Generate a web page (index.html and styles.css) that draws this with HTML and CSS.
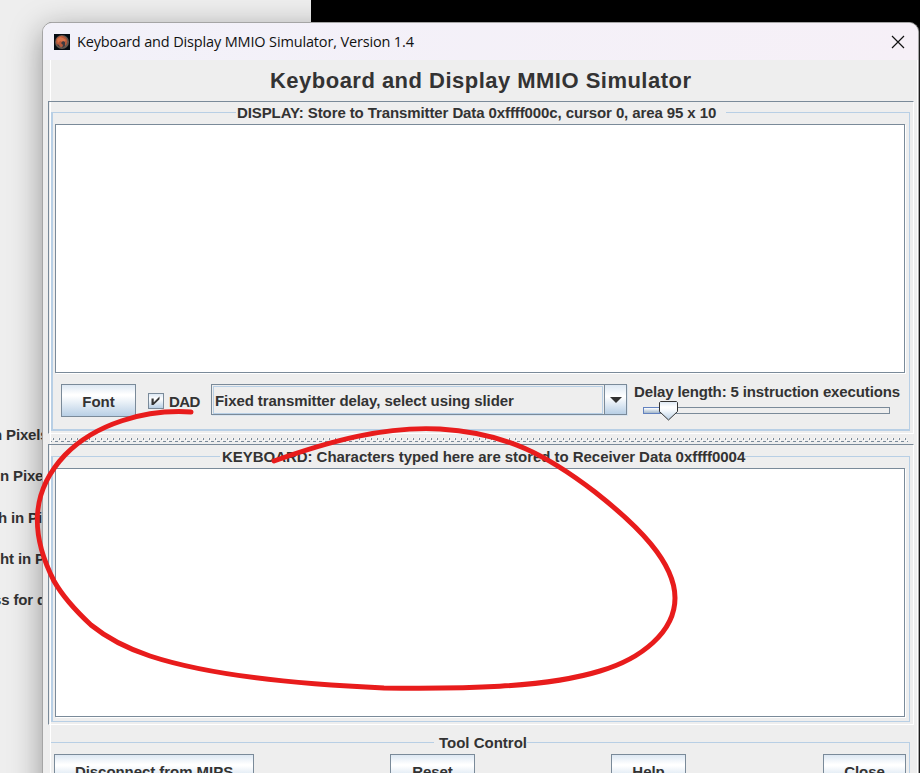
FILE: index.html
```html
<!DOCTYPE html>
<html lang="en">
<head>
<meta charset="utf-8">
<title>Keyboard and Display MMIO Simulator, Version 1.4</title>
<link rel="stylesheet" href="styles.css">
</head>
<body>
<div class="desktop">
  <div class="black-area"></div>
  <div class="back-labels">
    <span>n Pixels</span><span>n Pixels</span><span>h in Pixels</span><span>ht in Pixels</span><span>ss for display</span>
  </div>
  <main class="window">
    <header class="titlebar">
      <svg class="app-icon" viewBox="0 0 16 16"><rect width="16" height="16" fill="#050c12"/><circle cx="8" cy="8" r="7" fill="#64584f"/><circle cx="7.6" cy="7.4" r="5.6" fill="#b65a3b"/><path d="M3 5l3-2 3 1 3 2-2 2-4-1-2 2z" fill="#d8744a"/><path d="M9 7l2 1v4l-3 2 1-3-2-2zM3 10l2 1 1 2-2-1z" fill="#3d3a40"/></svg>
      <span class="window-title">Keyboard and Display MMIO Simulator, Version 1.4</span>
      <svg class="close" viewBox="0 0 14 14"><path d="M1 1l12 12M13 1L1 13" stroke="#111" stroke-width="1.2" fill="none"/></svg>
    </header>
    <div class="client">
      <h1><span>Keyboard and Display MMIO Simulator</span></h1>
      <section class="pane pane-display">
        <div class="legend"><span class="t-display">DISPLAY: Store to Transmitter Data 0xffff000c, cursor 0, area 95 x 10</span></div>
        <div class="group">
          <div class="textarea"></div>
          <div class="controls">
            <div class="button font"><span>Font</span></div>
            <div class="check"><svg viewBox="0 0 14 14"><path d="M2.500 4.500h2.200v6.500h-2.200zM4.500 8.500L10.500 2.500v2.700L4.500 11z" fill="#333"/></svg></div>
            <span class="t-dad">DAD</span>
            <div class="combo"><div class="combo-value"><span class="t-combo">Fixed transmitter delay, select using slider</span></div><div class="combo-arrow"><svg viewBox="0 0 12 6"><path d="M0 0h12L6 6z" fill="#333"/></svg></div></div>
            <div class="delay">
              <span class="t-delay">Delay length: 5 instruction executions</span>
              <div class="track"><div class="fill"></div><svg class="thumb" viewBox="0 0 19 20"><defs><linearGradient id="g" x1="0" y1="0" x2="0" y2="1"><stop offset="0" stop-color="#dce7f3"/><stop offset=".3" stop-color="#fff"/><stop offset=".5" stop-color="#f4f8fc"/><stop offset="1" stop-color="#b8cfe5"/></linearGradient></defs><path d="M1.500.5h16l1 1v9l-9 8.500-9-8.500v-9z" fill="url(#g)" stroke="#333"/></svg></div>
            </div>
          </div>
        </div>
      </section>
      <svg class="divider" width="860" height="10"><defs><pattern id="d" x="2" width="6" height="6" patternUnits="userSpaceOnUse"><path d="M0 0h1v2H0zM2 3h3v1H2z" fill="#7a8a99"/><path d="M5 0h1v1H5zM1 2h1v1H1z" fill="#fff"/></pattern></defs><g transform="translate(3 4)"><rect width="857" height="5" fill="url(#d)"/></g></svg>
      <section class="pane pane-keyboard">
        <div class="legend"><span class="t-keyboard">KEYBOARD: Characters typed here are stored to Receiver Data 0xffff0004</span></div>
        <div class="group"><div class="textarea"></div></div>
      </section>
      <section class="tool">
        <div class="legend"><span class="t-tool">Tool Control</span></div>
        <div class="group tool-buttons">
          <div class="button b1"><span>Disconnect from MIPS</span></div><div class="button b2"><span>Reset</span></div><div class="button b3"><span>Help</span></div><div class="button b4"><span>Close</span></div>
        </div>
      </section>
    </div>
  </main>
  <svg class="annotation" viewBox="0 0 920 773"><path d="M191 412C145 409 95 424 65 455C30 492 30 534 54 581C63 597 76 611 91 625C107 638 129 649 150 656C214 677 314 685 384 688C460 689 545 688 600 671C641 659 675 632 675 598C675 562 637 525 595 492C548 456 507 433 440 429C385 426 330 441 274 461" fill="none" stroke="#e81c1c" stroke-width="5" stroke-linecap="round" stroke-linejoin="round"/></svg>
</div>
</body>
</html>
```

FILE: styles.css
```css
* { box-sizing: border-box; }
body { margin: 0; overflow: hidden; font: bold 15px/18px "Liberation Sans", Arial, sans-serif; color: #333; }
svg { display: block; }
span { white-space: nowrap; }
.desktop { position: relative; width: 920px; height: 773px; overflow: hidden; background: #eee; }
.black-area { position: absolute; left: 311px; top: 0; right: 0; bottom: 0; background: #000; }
.back-labels { display: flex; flex-direction: column; gap: 23.300px; padding-top: 426px; width: 60px; letter-spacing: -.15px; }
.back-labels span:nth-child(1) { margin-left: -7px; }
.back-labels span:nth-child(3) { margin-left: -2px; }
.back-labels span:nth-child(5) { margin-left: -7px; }
.window { position: absolute; left: 42px; top: 22px; width: 877px; height: 780px; border: 1px solid #a5a5a5; border-radius: 10px 10px 0 0; background: #eee; box-shadow: 0 8px 32px rgba(0,0,0,.38), 1px 0 0 #222; overflow: hidden; }
.titlebar { display: flex; align-items: center; height: 37px; padding: 0 13px 0 11px; background: linear-gradient(100deg, #f2f1f9, #f6f0f7); }
.app-icon { width: 16px; height: 16px; }
.window-title { margin-left: 7px; flex: 1; font: 14.500px/20px "Open Sans", "Noto Sans", sans-serif; color: #111; letter-spacing: -.15px; }
.close { width: 14px; height: 14px; }
.client { margin-left: 5px; height: 740px; background: linear-gradient(#fff,#fff) 2px 0 / 1px 100% no-repeat, #eee; border-right: 1px solid #fff; }
h1 { margin: 0; height: 41px; padding-left: 222px; font: bold 22px/41px "Liberation Sans", Arial, sans-serif; letter-spacing: .48px; }
.pane { width: 866px; border: 1px solid #7a8a99; border-right-color: #fff; border-bottom-color: #fff; padding: 0 3px 2px 2px; }
.pane-display { height: 333px; }
.pane-keyboard { height: 281px; }
.legend { display: flex; height: 22px; align-items: flex-end; }
.legend::before, .legend::after { content: ""; height: 12px; background: linear-gradient(#b8cfe5, #b8cfe5) 0 0 / 100% 1px no-repeat; flex: none; }
.legend::before { width: 182px; border-left: 2px solid #b8cfe5; }
.legend::after { flex: 1; border-right: 1px solid #b8cfe5; }
.legend span { margin: 0 10px 2px 4px; }
.t-display { letter-spacing: -.1px; }
.t-keyboard { letter-spacing: -.04px; }
.pane-keyboard .legend { height: 23px; }
.pane-keyboard .legend::before { width: 167px; }
.pane-display .legend span { margin-left: 2px; }
.pane-display .legend::before { width: 183px; margin-right: -1px; }
.pane-keyboard .legend span { margin: 0 0 2px 2px; }
.group { border: solid #b8cfe5; border-width: 0 1px 2px 2px; padding: 0 4px 0 2px; }
.pane-display .group { height: 307px; }
.pane-keyboard .group { height: 254px; border-bottom-width: 1px; }
.textarea { height: 249px; background: #fff; border: 1px solid #7a8a99; box-shadow: 1px 1px 0 #fff; }
.controls { display: flex; padding: 11px 0 0 6px; }
.button { display: flex; flex: none; align-items: center; justify-content: center; border: 1px solid #7a8a99; background: linear-gradient(#dde8f3, #fff 30%, #fff 35%, #b8cfe5); }
.button span { padding-top: 2px; letter-spacing: -.05px; }
.font { width: 75px; height: 33px; }
.check { width: 16px; height: 16px; margin: 9px 0 0 12px; border: 1px solid #7a8a99; background: linear-gradient(#dde8f3, #fff 35%, #b8cfe5); }
.check svg { width: 14px; }
.t-dad { margin: 9px 0 0 5px; width: 42px; letter-spacing: -.6px; }
.combo { display: flex; flex: none; width: 416px; height: 31px; border: 1px solid #7a8a99; box-shadow: 1px 1px 0 #dbe5ef; }
.combo-value { width: 390px; margin: 1px 1px 0 1px; border: 1px solid #b8cfe5; padding: 5px 0 0 1px; }
.t-combo { letter-spacing: -.08px; }
.combo-arrow { flex: 1; border-left: 1px solid #7a8a99; background: linear-gradient(#dde8f3, #fff 40%, #b8cfe5); padding: 12px 0 0 5px; }
.combo-value { flex: none; }
.combo-arrow svg { width: 12px; }
.delay { margin-left: 7px; }
.t-delay { display: block; margin-top: -1px; letter-spacing: -.13px; }
.track { position: relative; width: 247px; height: 7px; margin: 6px 0 0 9px; border: 1px solid #7a8a99; }
.fill { width: 17px; height: 7px; margin: -1px; border: 1px solid #6382bf; background: linear-gradient(#fff, #a3b8cc); }
.thumb { position: absolute; left: 15px; top: -7px; width: 19px; height: 20px; }
.tool { padding: 7px 7px 0 3px; }
.tool .legend::before { width: 383px; border-left: 0; }
.tool .legend span { margin: 0 0 2px 5px; }
.tool-buttons { display: flex; height: 80px; padding: 0 4px 0 3px; border-left: 0; }
.tool-buttons .button { height: 33px; }
.b1 { width: 200px; }
.b2 { width: 85px; margin-left: 136px; }
.b3 { width: 75px; margin-left: 136px; }
.b4 { width: 83px; margin-left: 137px; }
.annotation { position: absolute; left: 0; top: 0; width: 920px; height: 773px; }
```
